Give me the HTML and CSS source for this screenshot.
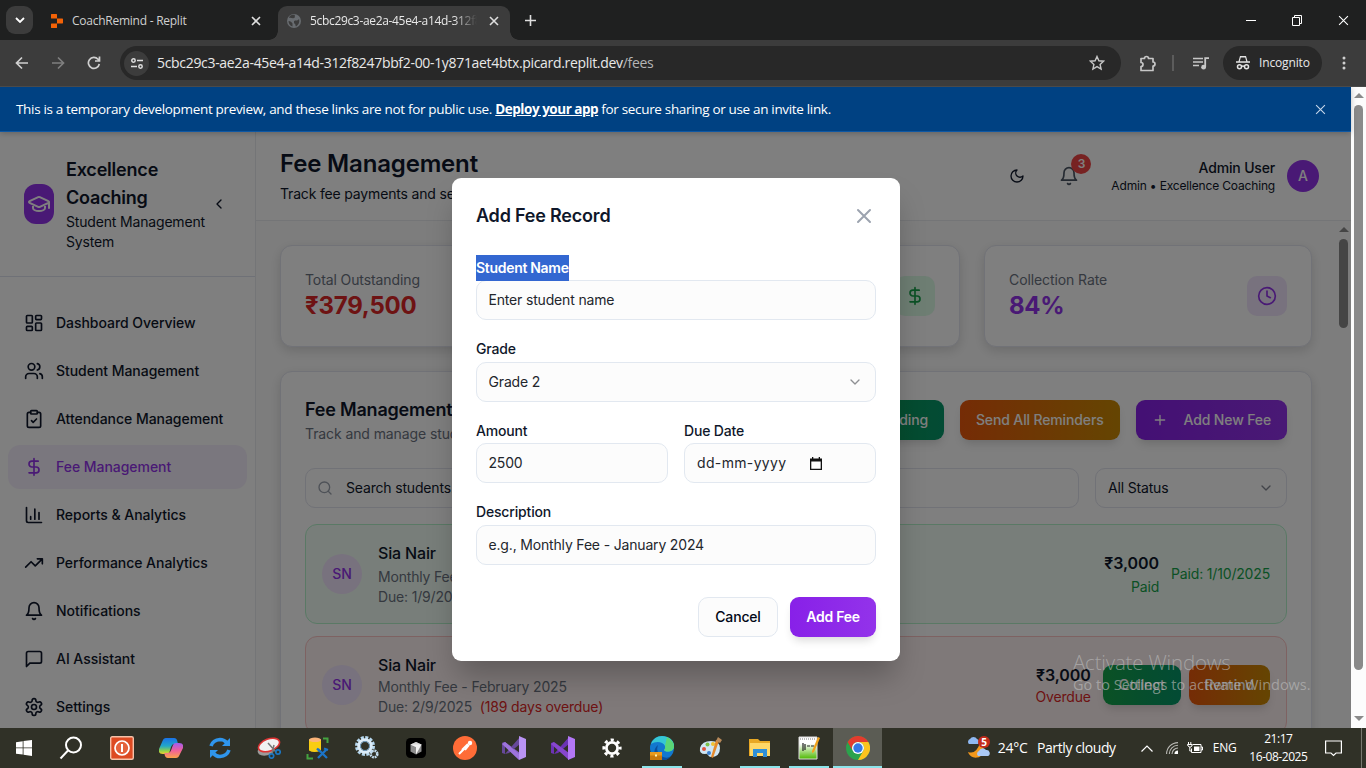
FILE: index.html
```html
<!DOCTYPE html>
<html lang="en">
<head>
<meta charset="utf-8">
<title>Fee Management</title>
<link rel="stylesheet" href="styles.css">
</head>
<body>
<svg class="defs" width="0" height="0" aria-hidden="true">
  <symbol id="x" viewBox="0 0 10 10"><path d="M1 1l8 8M9 1l-8 8" fill="none" stroke="currentColor"/></symbol>
  <symbol id="bell" viewBox="0 0 24 24"><path d="M6 8a6 6 0 0 1 12 0c0 7 3 9 3 9H3s3-2 3-9M10.3 21a1.94 1.94 0 0 0 3.4 0"/></symbol>
  <symbol id="dollar" viewBox="0 0 24 24"><path d="M12 2v20M17 5H9.5a3.5 3.5 0 0 0 0 7h5a3.5 3.5 0 0 1 0 7H6"/></symbol>
  <symbol id="down" viewBox="0 0 24 24"><path d="m6 9 6 6 6-6"/></symbol>
</svg>

<div class="screen">
  <div class="tabstrip">
    <div class="tab-search"><svg width="10" height="6" viewBox="0 0 10 6"><path d="M1 1l4 4 4-4" fill="none" stroke="#fff" stroke-width="1.8"/></svg></div>
    <div class="tab tab-idle">
      <svg width="12" height="14" viewBox="0 0 12 14" fill="#f26207"><path d="M.6 0h4.8q.6 0 .6.6V4.600H.6Q0 4.600 0 4V.6Q0 0 .6 0zM6 4.600h5.400q.6 0 .6.6v3.600q0 .6-.6.6H6zM.6 9.400H6v4q0 .6-.6.6H.6Q0 14 0 13.400V10q0-.6.6-.6z"/></svg>
      <span class="tab-title">CoachRemind - Replit</span>
      <svg class="tab-x" width="10" height="10"><use href="#x"/></svg>
    </div>
    <div class="tab tab-active">
      <svg width="14" height="14" viewBox="0 0 14 14"><circle cx="7" cy="7" r="7" fill="#686c70"/><path d="M2 4c2-1 3 1 5 0s0-2 1-3c-3-1-6 1-6 3zM7 7c2-1 4 0 5-2 1 4-1 6-3 7.500-1-1 0-3-2-3zM1.500 7c2 0 3 1 4 2.500v3C3 12 1.500 9.500 1.500 7z" fill="#3c3c3c"/></svg>
      <span class="tab-title fade">5cbc29c3-ae2a-45e4-a14d-312f8247</span>
      <svg class="tab-x" width="10" height="10"><use href="#x"/></svg>
    </div>
    <svg class="plus" width="11" height="11" viewBox="0 0 11 11"><path d="M5.500 0v11M0 5.500h11" stroke="#dedede" stroke-width="1.600"/></svg>
    <div class="winbtns">
      <svg width="10" height="11" viewBox="0 0 10 11"><path d="M0 5.500h10" stroke="#fff"/></svg>
      <svg width="11" height="11" viewBox="0 0 11 11" fill="none" stroke="#fff"><path d="M.5 2.500h7v8h-7zM2.500 2.500v-2h7v8h-2"/></svg>
      <svg width="11" height="11" viewBox="0 0 10 10" color="#fff"><use href="#x"/></svg>
    </div>
  </div>

  <div class="toolbar">
    <svg width="14" height="14" viewBox="0 0 14 14" fill="none" stroke="#d0d0d0" stroke-width="1.700"><path d="M13 7H2M7 1.500L1.500 7 7 12.500"/></svg>
    <svg width="14" height="14" viewBox="0 0 14 14" fill="none" stroke="#7f7f7f" stroke-width="1.700"><path d="M1 7h11M7 1.500L12.500 7 7 12.500"/></svg>
    <svg width="14" height="14" viewBox="0 0 14 14" fill="none" stroke="#d0d0d0" stroke-width="1.700"><path d="M12.300 8A5.500 5.500 0 1 1 11 3.200L12.500 4.800M12.500 .5v4.500H8"/></svg>
    <div class="urlbar">
      <div class="site"><svg width="12" height="11" viewBox="0 0 12 11" fill="none" stroke="#dedede" stroke-width="1.500"><circle cx="2.500" cy="2.500" r="1.700"/><path d="M6 2.500h6M0 8.500h6"/><circle cx="9.500" cy="8.500" r="1.700"/></svg></div>
      <span class="url">5cbc29c3-ae2a-45e4-a14d-312f8247bbf2-00-1y871aet4btx.picard.replit.dev<i>/fees</i></span>
      <svg width="16" height="16" viewBox="0 0 16 16" fill="none" stroke="#c7c7c7" stroke-width="1.400"><path d="M8 1.500l1.900 4.300 4.700.4-3.500 3.200 1 4.600L8 11.600 3.900 14l1-4.600L1.400 6.200l4.700-.4z"/></svg>
    </div>
    <svg class="ext" width="17" height="17" viewBox="0 0 17 17" fill="none" stroke="#c7c7c7" stroke-width="1.700"><path d="M2 3.500h3.500a2 2 0 0 1 4 0H14V7a2 2 0 0 1 0 4v4.500H2V11.500a2 2 0 0 0 0-4z" stroke-linejoin="round"/></svg>
    <div class="tsep"></div>
    <svg class="media" width="16" height="13" viewBox="0 0 16 13"><path d="M0 1.500h10M0 5h10M0 8.500h6" stroke="#c7c7c7" stroke-width="1.600"/><path d="M12.200 10V1.200H16" stroke="#c7c7c7" stroke-width="1.800" fill="none"/><circle cx="10.600" cy="10.200" r="2.400" fill="#c7c7c7"/></svg>
    <div class="incog"><svg width="14" height="14" viewBox="0 0 14 14"><path d="M4 0h6l1.500 5.200H14v1.600H0V5.200h2.500z" fill="#e3e3e3"/><path d="M4.800 1.500h4.400l1 3.700H3.800z" fill="#282828"/><g fill="none" stroke="#e3e3e3" stroke-width="1.500"><circle cx="3.500" cy="10.700" r="2"/><circle cx="10.500" cy="10.700" r="2"/><path d="M5.500 10.500q1.500-1 3 0"/></g></svg><span>Incognito</span></div>
    <svg width="4" height="14" viewBox="0 0 4 14" fill="#d0d0d0"><circle cx="2" cy="2" r="1.500"/><circle cx="2" cy="7" r="1.500"/><circle cx="2" cy="12" r="1.500"/></svg>
  </div>

  <div class="viewport">
    <div class="page">
      <div class="banner"><span>This is a temporary development preview, and these links are not for public use. <b>Deploy your app</b> for secure sharing or use an invite link.</span><svg width="11" height="11" viewBox="0 0 10 10" color="#c5d6ea"><use href="#x"/></svg></div>
      <div class="app">
        <aside class="side">
          <div class="brand">
            <div class="logo"><svg class="lu" width="24" height="24" viewBox="0 0 24 24"><path d="M21.420 10.922a1 1 0 0 0-.019-1.838L12.830 5.180a2 2 0 0 0-1.660 0L2.600 9.080a1 1 0 0 0 0 1.832l8.570 3.908a2 2 0 0 0 1.660 0zM22 10v6M6 12.500V16a6 3 0 0 0 12 0v-3.500"/></svg></div>
            <div class="brand-text"><h2>Excellence Coaching</h2><p>Student Management System</p></div>
            <svg class="lu" width="16" height="16" viewBox="0 0 24 24"><path d="m15 18-6-6 6-6"/></svg>
          </div>
          <nav>
            <a><svg class="lu" viewBox="0 0 24 24"><rect width="7" height="9" x="3" y="3" rx="1"/><rect width="7" height="5" x="14" y="3" rx="1"/><rect width="7" height="9" x="14" y="12" rx="1"/><rect width="7" height="5" x="3" y="16" rx="1"/></svg>Dashboard Overview</a>
            <a><svg class="lu" viewBox="0 0 24 24"><path d="M16 21v-2a4 4 0 0 0-4-4H6a4 4 0 0 0-4 4v2M22 21v-2a4 4 0 0 0-3-3.870M16 3.130a4 4 0 0 1 0 7.750"/><circle cx="9" cy="7" r="4"/></svg>Student Management</a>
            <a><svg class="lu" viewBox="0 0 24 24"><rect width="8" height="4" x="8" y="2" rx="1"/><path d="M16 4h2a2 2 0 0 1 2 2v14a2 2 0 0 1-2 2H6a2 2 0 0 1-2-2V6a2 2 0 0 1 2-2h2M9 14l2 2 4-4"/></svg>Attendance Management</a>
            <a class="on"><svg class="lu"><use href="#dollar"/></svg>Fee Management</a>
            <a><svg class="lu" viewBox="0 0 24 24"><path d="M3 3v16a2 2 0 0 0 2 2h16M18 17V9M13 17V5M8 17v-3"/></svg>Reports &amp; Analytics</a>
            <a><svg class="lu" viewBox="0 0 24 24"><path d="M22 7l-8.500 8.500-5-5L2 17M16 7h6v6"/></svg>Performance Analytics</a>
            <a><svg class="lu"><use href="#bell"/></svg>Notifications</a>
            <a><svg class="lu" viewBox="0 0 24 24"><path d="M21 15a2 2 0 0 1-2 2H7l-4 4V5a2 2 0 0 1 2-2h14a2 2 0 0 1 2 2z"/></svg>AI Assistant</a>
            <a><svg class="lu" viewBox="0 0 24 24"><path d="M12.220 2h-.44a2 2 0 0 0-2 2v.18a2 2 0 0 1-1 1.730l-.43.25a2 2 0 0 1-2 0l-.15-.08a2 2 0 0 0-2.730.73l-.22.38a2 2 0 0 0 .73 2.730l.15.1a2 2 0 0 1 1 1.720v.51a2 2 0 0 1-1 1.740l-.15.09a2 2 0 0 0-.73 2.730l.22.38a2 2 0 0 0 2.730.73l.15-.08a2 2 0 0 1 2 0l.43.25a2 2 0 0 1 1 1.730V20a2 2 0 0 0 2 2h.44a2 2 0 0 0 2-2v-.18a2 2 0 0 1 1-1.730l.43-.25a2 2 0 0 1 2 0l.15.08a2 2 0 0 0 2.730-.73l.22-.39a2 2 0 0 0-.73-2.730l-.15-.08a2 2 0 0 1-1-1.740v-.5a2 2 0 0 1 1-1.740l.15-.09a2 2 0 0 0 .73-2.730l-.22-.38a2 2 0 0 0-2.730-.73l-.15.08a2 2 0 0 1-2 0l-.43-.25a2 2 0 0 1-1-1.730V4a2 2 0 0 0-2-2z"/><circle cx="12" cy="12" r="3"/></svg>Settings</a>
          </nav>
        </aside>
        <div class="main">
          <header class="top">
            <div><h1>Fee Management</h1><p>Track fee payments and send reminders</p></div>
            <div class="top-right">
              <svg class="lu moon" width="16" height="16" viewBox="0 0 24 24"><path d="M12 3a6 6 0 0 0 9 9 9 9 0 1 1-9-9Z"/></svg>
              <div class="bell"><svg class="lu" width="20" height="20"><use href="#bell"/></svg><span>3</span></div>
              <div class="who"><b>Admin User</b><small>Admin • Excellence Coaching</small></div>
              <div class="me">A</div>
            </div>
          </header>
          <div class="scroll">
            <div class="content">
              <div class="stats">
                <div class="card stat"><div><p>Total Outstanding</p><strong class="red">₹379,500</strong></div></div>
                <div class="card stat"><div><p>Collected</p><strong class="green">₹1,992,500</strong></div><div class="ic ic-green"><svg class="lu" width="20" height="20"><use href="#dollar"/></svg></div></div>
                <div class="card stat"><div><p>Collection Rate</p><strong class="purple">84%</strong></div><div class="ic ic-purple"><svg class="lu" width="20" height="20" viewBox="0 0 24 24"><circle cx="12" cy="12" r="10"/><path d="M12 6v6l4 2"/></svg></div></div>
              </div>
              <div class="card fees">
                <div class="fees-head">
                  <div><h3>Fee Management</h3><p>Track and manage student fees</p></div>
                  <div class="btns"><span class="btn g">Collect Pending</span><span class="btn o">Send All Reminders</span><span class="btn p"><svg class="lu" width="16" height="16" viewBox="0 0 24 24"><path d="M5 12h14M12 5v14"/></svg>Add New Fee</span></div>
                </div>
                <div class="filters">
                  <div class="search"><svg class="lu" width="16" height="16" viewBox="0 0 24 24"><circle cx="11" cy="11" r="8"/><path d="m21 21-4.300-4.300"/></svg>Search students...</div>
                  <div class="status">All Status<svg class="lu" width="16" height="16"><use href="#down"/></svg></div>
                </div>
                <div class="row paid">
                  <div class="av">SN</div>
                  <div class="info"><h4>Sia Nair</h4><p>Monthly Fee - January 2025</p><p>Due: 1/9/2025</p></div>
                  <div class="amt"><b>₹3,000</b><span class="green">Paid</span></div>
                  <span class="green">Paid: 1/10/2025</span>
                </div>
                <div class="row due">
                  <div class="av">SN</div>
                  <div class="info"><h4>Sia Nair</h4><p>Monthly Fee - February 2025</p><p>Due: 2/9/2025 <em>(189 days overdue)</em></p></div>
                  <div class="amt"><b>₹3,000</b><span class="red">Overdue</span></div>
                  <div class="btns"><span class="btn g">Collect</span><span class="btn o">Remind</span></div>
                </div>
              </div>
            </div>
            <div class="inner-bar"><i class="up"></i><i class="thumb"></i></div>
          </div>
        </div>
        <div class="dim"></div>
      </div>
    </div>
    <div class="outer-bar"><i class="up"></i><i class="thumb"></i><i class="dn"></i></div>

    <div class="modal">
      <div class="modal-head"><h3>Add Fee Record</h3><svg class="lu" width="24" height="24" viewBox="0 0 24 24"><path d="M18 6 6 18M6 6l12 12"/></svg></div>
      <label><span class="sel">Student Name</span></label>
      <div class="field">Enter student name</div>
      <label>Grade</label>
      <div class="field split">Grade 2<svg class="lu" width="16" height="16"><use href="#down"/></svg></div>
      <div class="two">
        <div><label>Amount</label><div class="field">2500</div></div>
        <div><label>Due Date</label><div class="field date">dd-mm-yyyy<svg width="12" height="13" viewBox="0 0 12 13"><path d="M0 1.500h2V0h1.300v1.500h5.400V0H10v1.500h2V13H0zM1.300 4.500v7.200h9.400V4.500z" fill="#111" fill-rule="evenodd"/></svg></div></div>
      </div>
      <label>Description</label>
      <div class="field">e.g., Monthly Fee - January 2024</div>
      <div class="actions"><span class="cancel">Cancel</span><span class="btn p">Add Fee</span></div>
    </div>

    <div class="watermark"><p>Activate Windows</p><span>Go to Settings to activate Windows.</span></div>
  </div>

  <div class="taskbar">
    <div class="apps">
      <i><svg width="16" height="16" viewBox="0 0 16 16" fill="#fff"><path d="M0 2.200L6.700 1.200v6.300H0zM7.500 1.100L16 0v7.500H7.500zM0 8.300h6.700v6.300L0 13.700zM7.500 8.300H16V16l-8.500-1.200z"/></svg></i>
      <i><svg class="find" width="24" height="24" viewBox="0 0 24 24" fill="none" stroke="#fff" stroke-width="2"><circle cx="14.500" cy="9" r="7.500"/><path d="M9 14.500L1.500 22.500"/></svg></i>
      <i><svg width="24" height="24" viewBox="0 0 24 24"><rect x=".7" y=".7" width="22.600" height="22.600" rx="1.500" fill="#dd4a22" stroke="#f5c1a8" stroke-width="1.400"/><circle cx="12" cy="12" r="7" fill="#e4623c" stroke="#fff" stroke-width="1.700"/><path d="M12 8v8" stroke="#fff" stroke-width="2"/></svg></i>
      <i><svg width="24" height="22" viewBox="0 0 24 22"><defs><linearGradient id="c1" x2="0" y2="1"><stop stop-color="#1a72e8"/><stop offset=".5" stop-color="#22a7c8"/><stop offset=".8" stop-color="#8fd14b"/><stop offset="1" stop-color="#f3cf2f"/></linearGradient><linearGradient id="c2" x2="0" y2="1"><stop stop-color="#a25cf0"/><stop offset=".5" stop-color="#f0609a"/><stop offset="1" stop-color="#fba24a"/></linearGradient></defs><path d="M7 1h8q3 0 3.500 4l.5 2h-4q-2 0-3 3l-1.500 5q-.8 2-3 2H4q-5 0-4-5L3.500 4Q4.500 1 7 1z" fill="url(#c1)"/><path d="M17 21H9q-3 0-3.500-4l-.3-1h4q2 0 3-3L14 8q.8-2 3-2h3q5 0 4 5l-3.500 7Q19.500 21 17 21z" fill="url(#c2)"/></svg></i>
      <i><svg width="22" height="22" viewBox="0 0 22 22" fill="none" stroke="#2f95ec" stroke-width="3.600"><path d="M2 9Q4 3 11 2.500q4 0 6.500 3M20 13q-2 6-9 6.500-4 0-6.500-3"/><path d="M21 1v8h-8zM1 21v-8h8z" fill="#2f95ec" stroke="none"/></svg></i>
      <i><svg width="24" height="22" viewBox="0 0 24 22"><ellipse cx="9" cy="13" rx="8.500" ry="5.500" fill="#9b9b9b" transform="rotate(-15 9 13)"/><ellipse cx="12" cy="8" rx="11" ry="6" fill="#f1f1f1" stroke="#d33" stroke-width="1.600" transform="rotate(-20 12 8)"/><path d="M11 6l8 9M17 8l-2 9" stroke="#777" stroke-width="1.500"/><g fill="none" stroke="#1c77c3" stroke-width="1.700"><circle cx="14.500" cy="19" r="2.200"/><circle cx="21" cy="15" r="2.200"/></g></svg></i>
      <i><svg width="24" height="23" viewBox="0 0 24 23"><path d="M3 2.500v11q5 3 12 0v-11" fill="#f9cd12"/><ellipse cx="9" cy="2.800" rx="6" ry="2.300" fill="#fbb478"/><path d="M17 1.500h4.500V6M1.500 17v4.500H7" fill="none" stroke="#44a341" stroke-width="2"/><path d="M12 12l9 9M21 12l-9 9M18 11.500l4 1.500M11 11.500l3 3" stroke="#1c74c8" stroke-width="2.300"/></svg></i>
      <i><svg width="24" height="24" viewBox="0 0 24 24" fill="none"><circle cx="10" cy="10" r="8.500" stroke="#b7d9f0" stroke-width="3" stroke-dasharray="3 1.450"/><circle cx="10" cy="10" r="6.300" stroke="#dcecf8" stroke-width="3"/><circle cx="10" cy="10" r="4.500" stroke="#6f9ec4"/><circle cx="19" cy="18" r="3.300" stroke="#c5def0" stroke-width="2.600" stroke-dasharray="1.800 .8"/></svg></i>
      <i><svg width="20" height="20" viewBox="0 0 20 20"><rect width="20" height="20" rx="4.500" fill="#000"/><path d="M10 4l5.500 2.500v7L10 16.500l-5.500-3v-7z" fill="#8e8e8e"/><path d="M4.500 6.500L10 4l5.500 2.500L10 9z" fill="#d8d8d8"/><path d="M4.500 6.500h11L10 16.500V9z" fill="#f2f2f2"/></svg></i>
      <i><svg width="24" height="24" viewBox="0 0 24 24"><circle cx="12" cy="12" r="12" fill="#ff6c37"/><path d="M6 18l5-5M9 14l6-6M12 14l4-5" stroke="#fff" stroke-width="2"/><circle cx="17" cy="7" r="2.200" fill="#fff"/></svg></i>
      <i><svg width="24" height="24" viewBox="0 0 24 24"><path d="M0 7l3-1 15 11v6z" fill="#8a62c8"/><path d="M0 7l3-1v12l-3-1zM3 18L18 1v7L7 17z" fill="#66489a"/><path d="M17 0l7 3v18l-7 3z" fill="#b993f4"/><path d="M3 6l14 12v6L0 8z" fill="#9d73dc"/></svg></i>
      <i><svg width="24" height="24" viewBox="0 0 24 24"><path d="M0 7l3-1v12l-3-1zM3 18L18 1v7L7 17z" fill="#6b32b4"/><path d="M3 6l15 11v7L0 8z" fill="#8746ce"/><path d="M17 0l7 3v18l-7 3z" fill="#b377f6"/></svg></i>
      <i><svg width="20" height="20" viewBox="0 0 20 20" fill="none" stroke="#fff"><circle cx="10" cy="10" r="5.600" stroke-width="2.800"/><circle cx="10" cy="10" r="8.200" stroke-width="2.800" stroke-dasharray="3.200 3.240" stroke-dashoffset="1.600"/></svg></i>
      <i class="run"><svg width="24" height="24" viewBox="0 0 24 24"><circle cx="12" cy="12" r="12" fill="#1278cf"/><path d="M1 8Q4 0 12 0c8 0 13 6 12 11-1 5-6 5-9 4-2-1 1-2 0-5-2-5-10-5-14-2z" fill="#36c7d4"/><path d="M17 1q7 4 7 10c-1 5-6 5-9 4-2-1 1-2 0-5z" fill="#5bd676"/><path d="M8 9q-3 8 5 12 5 2 8-1-6 8-15 2Q2 14 8 9z" fill="#0b4f9c"/><path d="M0 16h12v8H0z" fill="#c8790c"/><path d="M0 16h12v3.500H0z" fill="#e99a1d"/><rect x="5" y="18.500" width="2" height="2" fill="#fff3b0"/></svg></i>
      <i><svg width="24" height="24" viewBox="0 0 24 24"><path d="M1 12Q3 5 12 5q9 0 9 7 0 9-9 9-2 0-3-2t-3-1q-6 0-5-6z" fill="#cfe6f5"/><circle cx="5" cy="13" r="2" fill="#e0533e"/><circle cx="8.500" cy="8.500" r="2" fill="#7cc04b"/><circle cx="14" cy="8" r="2" fill="#f1c232"/><circle cx="10" cy="17" r="2" fill="#3b7fd0"/><path d="M20 5l-6 17-2-1 5-17z" fill="#e58a2c"/><path d="M17 5l2-4 4 3-2 3z" fill="#b98a5a"/></svg></i>
      <i class="run"><svg width="22" height="20" viewBox="0 0 22 20"><path d="M0 1h9l2 2h10v15H0z" fill="#e8a824"/><path d="M1 5h20v13H1z" fill="#ffd766"/><path d="M4 11h14v8h-4v-4H8v4H4z" fill="#2e8fd8"/></svg></i>
      <i class="run"><svg width="22" height="24" viewBox="0 0 22 24"><defs><linearGradient id="np" x2="0" y2="1"><stop offset=".3" stop-color="#fff"/><stop offset="1" stop-color="#4cb800"/></linearGradient></defs><path d="M1 1h18v22H1z" fill="url(#np)" stroke="#ddd"/><path d="M2 3h15" stroke="#777" stroke-dasharray="1 1"/><path d="M5 7v8M7 8v6M9 10h3M13 10h3" stroke="#222" stroke-width="1.200"/><path d="M20 1l2 1-6 14-2 1v-2z" fill="#f2a31b"/></svg></i>
      <i class="run cur"><svg width="24" height="24" viewBox="0 0 24 24"><circle cx="12" cy="12" r="12" fill="#2ba24c"/><path d="M1.600 6A12 12 0 0 1 22.400 6H12A6 6 0 0 0 6.800 15z" fill="#e33b2e"/><path d="M22.400 6A12 12 0 0 1 12 24l5.200-9A6 6 0 0 0 12 6z" fill="#fcc31e"/><circle cx="12" cy="12" r="6" fill="#fff"/><circle cx="12" cy="12" r="4.700" fill="#3478e5"/></svg></i>
    </div>
    <div class="weather">
      <svg width="25" height="24" viewBox="0 0 25 24"><path d="M14 7a8 8 0 1 1-12 9q8 3 12-9z" fill="#f2971b"/><path d="M3 8a3 3 0 0 1 1-5 4 4 0 0 1 7 0 3 3 0 0 1 1 5z" fill="#8fb8f0"/><path d="M12 20a3 3 0 0 1 1-5 4 4 0 0 1 7-1 3.200 3.200 0 0 1 2 6z" fill="#a9c8f6"/><circle cx="18" cy="6" r="6" fill="#c42b1c"/><text x="18" y="9.600" text-anchor="middle">5</text></svg>
      <span>24°C</span><span class="cloudy">Partly cloudy</span>
    </div>
    <svg class="t-up" width="12" height="7" viewBox="0 0 12 7"><path d="M.5 6.500L6 1l5.500 5.500" fill="none" stroke="#fff" stroke-width="1.200"/></svg>
    <svg class="t-wifi" width="12" height="12" viewBox="0 0 12 12" fill="none" stroke="#b9b9b4" stroke-width="1.100"><path d="M.6 12A11.400 11.400 0 0 1 12 .6M3.300 12A8.700 8.700 0 0 1 12 3.300M6 12a6 6 0 0 1 6-6"/><path d="M9 12a3 3 0 0 1 3-3v3z" fill="#fff" stroke="#fff"/></svg>
    <svg class="t-bat" width="16" height="12" viewBox="0 0 16 12"><path d="M5.500 2.500H14v8H4.500V6.500M14 5h1.500v3H14M1.500 0v2.500M3.800 0v2.500M.5 2.500h4.500v1.500q-2 2.500-4 0zM2.800 5v4h2" fill="none" stroke="#fff"/><path d="M7 4.500h5.500v4.500H7z" fill="#fff"/></svg>
    <span class="t-eng">ENG</span>
    <div class="clock"><span>21:17</span><span>16-08-2025</span></div>
    <svg class="t-note" width="17" height="17" viewBox="0 0 17 17"><path d="M.6 1h15.800v12h-5.400l-2.500 2.500L6 13H.6z" fill="none" stroke="#fff" stroke-width="1.200"/></svg>
    <div class="desk"></div>
  </div>
</div>
</body>
</html>
```

FILE: styles.css
```css
* { box-sizing: border-box; }
body { margin: 0; font-family: Inter, "Liberation Sans", sans-serif; font-size: 14px; line-height: 20px; letter-spacing: -.17px; color: #0f172a; }
h1, h2, h3, h4, p { margin: 0; }
i { font-style: normal; }
svg { flex: none; display: block; }
.defs { position: absolute; }
.screen { width: 1366px; height: 768px; overflow: hidden; display: flex; flex-direction: column; }

/* Window frame */
.tabstrip, .toolbar, .banner, .taskbar, .watermark { font-family: "Open Sans", "Noto Sans", sans-serif; }
.tabstrip { height: 40px; background: #1f2020; display: flex; align-items: center; color: #e3e3e3; font-size: 12px; padding-left: 6px; }
.tab-search { width: 27px; height: 28px; border-radius: 9px; background: #3c3c3c; display: grid; place-items: center; }
.tab { display: flex; align-items: center; }
.tab-idle { width: 227px; margin-left: 18px; padding-top: 1px; }
.tab-title { margin-left: 9px; white-space: nowrap; width: 170px; overflow: hidden; letter-spacing: -.25px; color: #d0d0d0; }
.tab-idle .tab-x { margin-left: 9px; }
.tab-x { color: #dedede; stroke-width: 1.6px; }
.tab-active { width: 232px; height: 34px; margin-top: 6px; padding: 0 0 5px 9px; background: #3c3c3c; border-radius: 9px 9px 0 0; position: relative; }
.tab-active::before, .tab-active::after { content: ""; position: absolute; bottom: 0; width: 9px; height: 9px; }
.tab-active::before { left: -9px; background: radial-gradient(circle at 0 0, transparent 8.500px, #3c3c3c 9px); }
.tab-active::after { right: -9px; background: radial-gradient(circle at 100% 0, transparent 8.500px, #3c3c3c 9px); }
.tab-active .tab-x { margin-left: 12px; }
.fade { width: 167px; letter-spacing: -.33px; color: #e8e8e8; -webkit-mask: linear-gradient(90deg, #000 86%, transparent); mask: linear-gradient(90deg, #000 86%, transparent); }
.plus { margin-left: 15px; }
.winbtns { margin-left: auto; display: flex; gap: 35.500px; padding-right: 17px; align-items: center; }
.toolbar { height: 47px; background: #3c3c3c; border-bottom: 1px solid #4a4a4a; display: flex; align-items: center; padding-left: 15px; gap: 22px; }
.urlbar { width: 1001px; height: 34px; border-radius: 17px; background: #282828; display: flex; align-items: center; padding: 0 16px 0 4px; margin-left: -3px; }
.site { width: 25px; height: 25px; border-radius: 50%; background: #3c3c3c; display: grid; place-items: center; }
.url { margin-left: 8px; font-size: 14px; letter-spacing: -.32px; color: #e8e8e8; flex: 1; white-space: nowrap; }
.url i { color: #b5b5b5; }
.ext { margin-left: -4px; }
.tsep { width: 2px; height: 16px; margin-left: -6px; background: #5c5c5c; }
.media { margin-left: -3px; }
.incog { width: 99px; height: 34px; border-radius: 17px; background: #282828; color: #e8e8e8; font-size: 12px; letter-spacing: -.15px; display: flex; align-items: center; gap: 9px; padding-left: 13px; margin: 0 -2px 0 -8px; }

/* Page */
.viewport { height: 641px; display: flex; position: relative; overflow: hidden; }
.page { width: 1351px; display: flex; flex-direction: column; }
.banner { height: 45px; background: #004182; border-bottom: 1px solid #0d57a3; color: #fff; font-size: 13.500px; letter-spacing: -.33px; display: flex; align-items: center; justify-content: space-between; padding: 0 25px 0 16px; flex: none; position: relative; z-index: 2; box-shadow: 0 1px 6px rgba(0,0,0,.25); }
.banner b { text-decoration: underline; letter-spacing: -.47px; }
.app { flex: 1; display: flex; position: relative; overflow: hidden; background: #fcfcfc; }
.dim { position: absolute; inset: 0; background: rgba(0,0,0,.5); }
.lu { fill: none; stroke: currentColor; stroke-width: 2; stroke-linecap: round; stroke-linejoin: round; }
.side { width: 256px; border-right: 1px solid #e8eaee; flex: none; background: #fefefe; }
.brand { height: 145px; padding: 24px 28px 24px 24px; border-bottom: 1px solid #dfe3ef; display: flex; align-items: center; }
.logo { width: 30px; height: 40px; border-radius: 12px; background: #9333ea; color: #fff; display: grid; place-items: center; flex: none; }
.brand-text { width: 145px; margin-left: 12px; }
.brand h2 { font-size: 18px; line-height: 28px; font-weight: 600; letter-spacing: -.2px; }
.brand > .lu { margin-left: auto; }
nav { padding: 24px 8px 0; display: flex; flex-direction: column; gap: 4px; }
nav a { height: 44px; border-radius: 12px; padding-left: 16px; display: flex; align-items: center; gap: 12px; font-weight: 500; letter-spacing: -.04px; }
nav .lu { width: 20px; height: 20px; }
nav .on { background: #f5effc; color: #9333ea; }
.main { flex: 1; min-width: 0; display: flex; flex-direction: column; }
.top { height: 89px; padding: 16px 32px 0 24px; border-bottom: 1px solid #e8eaee; background: #fefefe; display: flex; justify-content: space-between; flex: none; }
.top h1 { font-size: 24px; line-height: 32px; font-weight: 600; }
.top p { margin-top: 4px; line-height: 20px; }
.top-right { display: flex; align-items: center; height: 56px; }
.bell { position: relative; margin: 0 32px 0 34px; color: #4b5563; }
.bell span { position: absolute; left: 12px; top: -12px; width: 20px; height: 20px; border-radius: 50%; background: #ef4444; color: #fff; font-size: 12px; font-weight: 600; text-align: center; }
.who { text-align: right; display: flex; flex-direction: column; }
.who b { font-weight: 500; line-height: 20px; }
.who small { font-size: 12px; line-height: 16px; }
.me { width: 32px; height: 32px; border-radius: 50%; background: #9333ea; color: #fff; font-weight: 500; display: grid; place-items: center; margin-left: 12px; }
.scroll { flex: 1; display: flex; background: #fbfbfb; min-height: 0; overflow: hidden; }
.content { flex: 1; padding: 24px 24px 0 24px; }
.inner-bar, .outer-bar { width: 15px; background: #fcfcfc; display: flex; flex-direction: column; align-items: center; flex: none; }
.up { border: 5px solid transparent; border-top: 0; border-bottom: 5px solid #8a8a8a; margin-top: 6px; }
.dn { border: 5px solid transparent; border-bottom: 0; border-top: 5px solid #8a8a8a; margin-top: 46px; }
.thumb { width: 9px; height: 89px; border-radius: 5px; background: #8a8a8a; margin-top: 7px; }
.outer-bar .thumb { height: 565px; }
.inner-bar { background: #fbfbfb; }
.card { background: #fefefe; border: 1px solid #e2e4ee; border-radius: 12px; box-shadow: 0 4px 12px rgba(0,0,0,.14); }
.stats { display: grid; grid-template-columns: repeat(3, 1fr); gap: 24px; }
.stat { height: 102px; padding: 24px; display: flex; justify-content: space-between; align-items: center; }
.stat p, .fees-head p { color: #6b7280; letter-spacing: -.1px; }
.stat strong { display: block; font-size: 24px; line-height: 32px; font-weight: 700; letter-spacing: -.25px; }
.red, em { color: #dc2626; font-style: normal; }
.stat .purple { color: #9333ea; }
.green { color: #16a34a; }
.ic { width: 40px; height: 40px; border-radius: 10px; display: grid; place-items: center; }
.ic-green { background: #dcfce7; color: #16a34a; }
.ic-purple { background: #f0e4fc; color: #9333ea; }
.fees { margin-top: 24px; padding: 24px; height: 600px; }
.fees-head { display: flex; justify-content: space-between; align-items: center; }
.fees h3 { font-size: 18px; line-height: 28px; font-weight: 600; letter-spacing: -.2px; }
.btns { display: flex; gap: 16px; }
.btn { height: 40px; padding: 0 16px; border-radius: 9px; color: #fff; font-weight: 500; display: flex; align-items: center; box-shadow: 0 6px 10px -3px rgba(0,0,0,.16); white-space: nowrap; letter-spacing: -.14px; }
.btn .lu { margin-right: 16px; }
.g { background: linear-gradient(90deg, #16a34a, #059669); }
.o { background: linear-gradient(90deg, #ea580c, #ca8a04); }
.p { background: linear-gradient(90deg, #8820e8, #9333ea); }
.filters { display: flex; gap: 16px; margin-top: 24px; }
.search, .status { height: 40px; border: 1px solid #e2e4ee; border-radius: 10px; display: flex; align-items: center; padding: 0 12px; }
.search { flex: 1; gap: 13px; padding-left: 11px; }
.search .lu { color: #9ca3af; }
.status { width: 192px; justify-content: space-between; }
.status .lu, .split .lu { opacity: .5; }
.row { height: 100px; border: 1px solid; border-radius: 12px; padding: 0 16px; margin-top: 16px; display: flex; align-items: center; }
.paid { background: #f0fdf4; border-color: #b4f3cb; }
.due { background: #fef2f2; border-color: #fdc4c4; margin-top: 12px; height: 98px; }
.av { width: 40px; height: 40px; border-radius: 50%; background: #f0e4fc; color: #9333ea; font-weight: 500; display: grid; place-items: center; margin-right: 16px; }
.info { flex: 1; color: #6b7280; }
.info h4 { font-size: 16px; line-height: 24px; font-weight: 500; color: #0f172a; }
.paid h4 { margin-bottom: 2px; }
.info em { margin-left: 4px; }
.amt { display: flex; flex-direction: column; text-align: right; margin-right: 12px; }
.amt b { font-size: 16px; line-height: 24px; font-weight: 600; letter-spacing: -.05px; }
.paid .amt { gap: 2px; }
.due .btns { gap: 8px; }

/* Dialog */
.modal { position: absolute; left: 452px; top: 91px; width: 448px; height: 483px; padding: 24px; background: #fff; border-radius: 9px; box-shadow: 0 20px 30px -5px rgba(0,0,0,.25); z-index: 3; }
.modal-head { display: flex; justify-content: space-between; line-height: 28px; height: 52.500px; }
.modal-head h3 { font-size: 18px; font-weight: 600; letter-spacing: -.2px; }
.modal-head .lu { color: #9ca3af; margin-top: 2px; }
.modal label { display: block; font-weight: 500; line-height: 25.600px; height: 25.600px; }
.modal .sel { display: inline-block; background: #3367d1; color: #fff; height: 26px; font-weight: 600; letter-spacing: -.3px; }
.field { height: 40px; border: 1px solid #e2e8f0; border-radius: 10px; background: #fcfcfc; padding: 0 12px 0 11.500px; display: flex; align-items: center; color: #23262c; margin-bottom: 16px; }
.split { justify-content: space-between; }
.two { display: grid; grid-template-columns: 1fr 1fr; gap: 16px; }
.date { gap: 23px; padding-left: 12px; letter-spacing: .35px; }
.actions { display: flex; justify-content: flex-end; gap: 12px; margin-top: 32px; }
.actions .btn { font-weight: 600; letter-spacing: -.25px; width: 86px; justify-content: center; padding: 0; }
.cancel { height: 40px; width: 80px; border: 1px solid #e2e8f0; border-radius: 10px; background: #fcfcfc; font-weight: 500; color: #020817; display: grid; place-items: center; }

.watermark { position: absolute; left: 1073px; top: 562px; color: rgba(190,190,190,.62); white-space: nowrap; }
.watermark p { font-size: 20.500px; line-height: 26px; letter-spacing: -.2px; font-weight: 300; }
.watermark span { font-size: 14.500px; line-height: 20px; letter-spacing: 0; }

/* Taskbar */
.taskbar { height: 40px; background: #303127; display: flex; align-items: center; color: #fff; }
.apps { display: flex; height: 40px; margin-left: -.6px; }
.apps i { width: 49.060px; display: grid; place-items: center; }
.apps .find { margin-right: 3px; }
.apps .run { box-shadow: inset 5px 0 #303127, inset -4px 0 #303127, inset 0 -2px #8ce4ea; }
.apps .cur { background: #5b5c54; box-shadow: inset 0 -2px #8ce4ea; }
.weather { margin-left: 83.600px; width: 175px; display: flex; align-items: center; font-size: 14px; letter-spacing: -.3px; }
.weather span { margin-left: 7px; }
.weather .cloudy { margin-left: 9.500px; white-space: nowrap; letter-spacing: -.4px; }
.weather text { fill: #fff; font: 700 10px "Open Sans", sans-serif; letter-spacing: 0; }
.t-up { margin-left: 0; }
.t-wifi { margin-left: 13px; }
.t-bat { margin-left: 9px; }
.t-eng { font-size: 12px; letter-spacing: -.3px; margin-left: 10px; }
.clock { display: flex; flex-direction: column; align-items: center; font-size: 12px; line-height: 18px; letter-spacing: -.45px; width: 62px; margin-left: 11px; white-space: nowrap; }
.t-note { margin-left: 15.500px; }
.desk { margin-left: auto; width: 5px; height: 40px; border-left: 1px solid #77786f; }
```
